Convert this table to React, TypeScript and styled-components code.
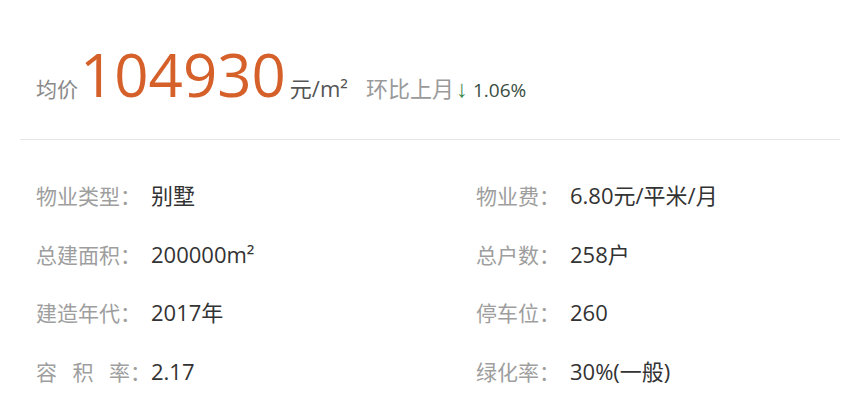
import React from "react";
import styled, { createGlobalStyle } from "styled-components";

const GlobalStyle = createGlobalStyle`
  html, body {
    margin: 0;
    padding: 0;
    background: #ffffff;
  }

  body {
    font-family: "Open Sans", "Noto Sans CJK SC", sans-serif;
    -webkit-font-smoothing: antialiased;
  }
`;

const Page = styled.div`
  width: 846px;
  height: 401px;
  box-sizing: border-box;
  padding: 0 6px 0 20px;
  overflow: hidden;
`;

// 均价 头部
const PriceRow = styled.div`
  display: flex;
  align-items: baseline;
  padding: 44px 0 0 16px;
`;

const PriceLabel = styled.span`
  font-family: "Noto Sans CJK SC", sans-serif;
  font-size: 21px;
  color: #8a8a8a;
`;

const PriceValue = styled.span`
  font-family: "Open Sans", sans-serif;
  font-size: 60px;
  line-height: 60px;
  color: #d5602a;
  margin-left: 2px;
`;

const PriceUnit = styled.span`
  font-family: "Open Sans", "Noto Sans CJK SC", sans-serif;
  font-size: 22px;
  color: #555555;
  margin-left: 4px;
`;

const Compare = styled.span`
  font-family: "Noto Sans CJK SC", sans-serif;
  font-size: 22px;
  color: #9a9a9a;
  margin-left: 18px;
`;

const Arrow = styled.span<{ $up?: boolean }>`
  font-family: "Liberation Sans", sans-serif;
  font-size: 24px;
  color: ${({ $up }) => ($up ? "#d5602a" : "#3d8a4f")};
  margin: 0 5px 0 2px;
`;

const Percent = styled.span`
  font-family: "Open Sans", sans-serif;
  font-size: 19px;
  color: #3a4e42;
`;

const Divider = styled.div`
  height: 1px;
  background: #e6e6e6;
  margin-top: 35px;
`;

// 楼盘信息
const InfoGrid = styled.div`
  display: grid;
  grid-template-columns: 440px 1fr;
  grid-auto-rows: 58.6px;
  padding: 26px 0 0 16px;
`;

const Row = styled.div`
  display: flex;
  align-items: baseline;
  height: 58.6px;
`;

const Label = styled.span`
  font-family: "Noto Sans CJK SC", sans-serif;
  font-size: 21px;
  line-height: 59px;
  color: #9e9e9e;
  white-space: nowrap;
`;

const Spaced = styled.span`
  letter-spacing: 15.5px;
`;

const TightColon = styled.span`
  letter-spacing: -10px;
`;

const Value = styled.span`
  font-family: "Open Sans", "Noto Sans CJK SC", sans-serif;
  font-size: 22px;
  line-height: 59px;
  color: #333333;
  margin-left: 10px;
  white-space: nowrap;
`;

interface Info {
  label: React.ReactNode;
  value: string;
}

const left: Info[] = [
  { label: "物业类型：", value: "别墅" },
  { label: "总建面积：", value: "200000m²" },
  { label: "建造年代：", value: "2017年" },
  {
    label: (
      <>
        <Spaced>容积</Spaced>率<TightColon>：</TightColon>
      </>
    ),
    value: "2.17",
  },
];

const right: Info[] = [
  { label: "物业费：", value: "6.80元/平米/月" },
  { label: "总户数：", value: "258户" },
  { label: "停车位：", value: "260" },
  { label: "绿化率：", value: "30%(一般)" },
];

const App: React.FC = () => {
  const rows = left.map((item, i) => [item, right[i]]);

  return (
    <>
      <GlobalStyle />
      <Page>
        <PriceRow>
          <PriceLabel>均价</PriceLabel>
          <PriceValue>104930</PriceValue>
          <PriceUnit>元/m²</PriceUnit>
          <Compare>环比上月</Compare>
          <Arrow>↓</Arrow>
          <Percent>1.06%</Percent>
        </PriceRow>

        <Divider />

        <InfoGrid>
          {rows.map((pair, i) =>
            pair.map((item, j) => (
              <Row key={`${i}-${j}`}>
                <Label>{item.label}</Label>
                <Value>{item.value}</Value>
              </Row>
            ))
          )}
        </InfoGrid>
      </Page>
    </>
  );
};

export default App;
